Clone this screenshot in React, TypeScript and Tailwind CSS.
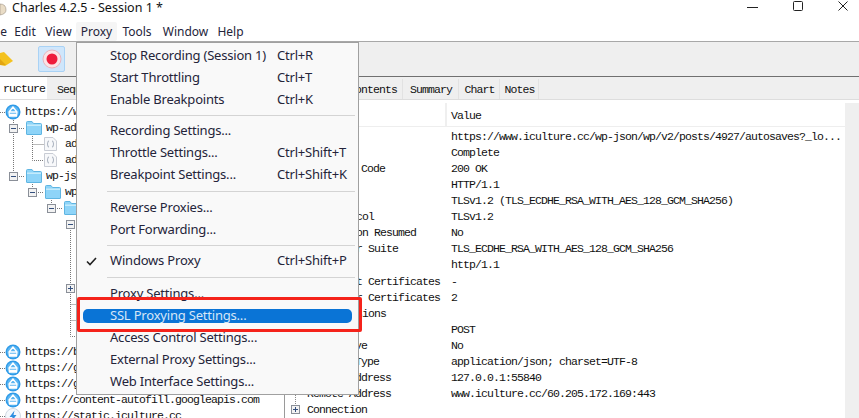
import React from 'react';

const mono = "font-['Liberation_Mono',monospace] text-[11.5px] tracking-[-0.9px] text-[#111]";

const Globe = () => (
  <svg width="16" height="16" viewBox="0 0 16 16" className="shrink-0">
    <circle cx="8" cy="8" r="7.5" fill="#2f9be8" />
    <circle cx="8" cy="8" r="6" fill="#5cb6f2" />
    <path d="M8 3 L4 8 L4.5 12 H11.5 L12 8 Z M4 8 H12 M5 10.5 H11" fill="none" stroke="#fff" strokeWidth="1.3" />
  </svg>
);

const Bolt = () => (
  <svg width="16" height="16" viewBox="0 0 16 16" className="shrink-0">
    <circle cx="8" cy="8" r="7.5" fill="#f4f8fc" stroke="#cfd8e2" />
    <path d="M9.5 2.5 L4.5 9 H7.5 L6.5 13.5 L11.5 7 H8.5 Z" fill="#2f8fe0" />
  </svg>
);

const Folder = () => (
  <svg width="16" height="14" viewBox="0 0 16 14" className="shrink-0">
    <path d="M0.5 13 V1.5 Q0.5 0.5 1.5 0.5 H6 L7.5 2.5 H14.5 Q15.5 2.5 15.5 3.5 V13 Q15.5 13.5 15 13.5 H1 Q0.5 13.5 0.5 13 Z" fill="#8ed4f8" stroke="#5fb5e2" />
    <rect x="1" y="3.5" width="14" height="1.5" fill="#c4ebfc" />
  </svg>
);

const FileIcon = () => (
  <svg width="13" height="14" viewBox="0 0 13 14" className="shrink-0">
    <path d="M0.5 0.5 H9 L12.5 4 V13.5 H0.5 Z" fill="#f7f8fa" stroke="#c8ccd4" />
    <path d="M5 4 Q3.8 4 3.8 5.2 V6.2 L3 7 L3.8 7.8 V9 Q3.8 10 5 10 M8 4 Q9.2 4 9.2 5.2 V6.2 L10 7 L9.2 7.8 V9 Q9.2 10 8 10" fill="none" stroke="#9aa4b2" strokeWidth="0.9" />
  </svg>
);

const Box = ({ plus = false }: { plus?: boolean }) => (
  <svg width="9" height="9" viewBox="0 0 9 9" className="shrink-0">
    <rect x="0.5" y="0.5" width="8" height="8" fill="#f2f2f2" stroke="#8a8f98" />
    <path d={plus ? 'M2 4.5 H7 M4.5 2 V7' : 'M2 4.5 H7'} stroke="#34507e" />
  </svg>
);

// dotted connectors behind the tree
const TreeLines = () => (
  <svg width="285" height="315" viewBox="0 0 285 315" className="absolute left-0 top-0">
    <path
      d="M0 8.5 H5 M13.5 16 V72 M17 24.5 H25 M17 72.5 H25 M32.5 32 V56.5 H44 M32.5 40.5 H44 M32.5 80 V84 M36 88.5 H44 M51.5 96 V100 M55 104.5 H63 M70.5 124 V232.5 H76 M70.5 200.5 H76 M70.5 216.5 H76 M0 248.5 H5 M0 264.5 H5 M0 280.5 H5 M0 296.5 H5 M0 312.5 H5"
      fill="none"
      stroke="#777"
      strokeDasharray="1 1"
    />
  </svg>
);

const Row = ({ className = '', children }: { className?: string; children?: React.ReactNode }) => (
  <div className={`h-4 flex items-center whitespace-nowrap ${mono} ${className}`}>{children}</div>
);

const Tree = () => (
  <div className="relative h-full overflow-hidden">
    <TreeLines />
    <div className="relative">
      <Row className="pl-[5px] gap-1"><Globe /><span>https://www.iculture.cc</span></Row>
      <Row className="pl-[9px]"><Box /><span className="w-2" /><span className="pr-1"><Folder /></span><span>wp-admin</span></Row>
      <Row className="pl-[44px] gap-2"><FileIcon /><span>admin-ajax.php</span></Row>
      <Row className="pl-[44px] gap-2"><FileIcon /><span>admin-post.php</span></Row>
      <Row className="pl-[9px]"><Box /><span className="w-2" /><span className="pr-1"><Folder /></span><span>wp-json</span></Row>
      <Row className="pl-[28px]"><Box /><span className="w-2" /><span className="pr-1"><Folder /></span><span>wp</span></Row>
      <Row className="pl-[47px]"><Box /><span className="w-2" /><Folder /></Row>
      <Row className="pl-[66px]"><Box /></Row>
      <Row /><Row /><Row />
      <Row className="pl-[66px]"><Box plus /></Row>
      <Row /><Row /><Row />
      <Row className="pl-[5px] gap-1"><Globe /><span>https://beacon.com</span></Row>
      <Row className="pl-[5px] gap-1"><Globe /><span>https://googleads.com</span></Row>
      <Row className="pl-[5px] gap-1"><Globe /><span>https://gstatic.com</span></Row>
      <Row className="pl-[5px] gap-1"><Globe /><span>https://content-autofill.googleapis.com</span></Row>
      <Row className="pl-[5px] gap-1"><Bolt /><span>https://static.iculture.cc</span></Row>
    </div>
  </div>
);

const overview: [string, string, string][] = [
  ['URL', 'pl-[22px]', 'https://www.iculture.cc/wp-json/wp/v2/posts/4927/autosaves?_lo...'],
  ['Status', 'pl-[22px]', 'Complete'],
  ['Response Code', 'pl-[22px]', '200 OK'],
  ['Protocol', 'pl-[22px]', 'HTTP/1.1'],
  ['TLS', 'pl-[22px]', 'TLSv1.2 (TLS_ECDHE_RSA_WITH_AES_128_GCM_SHA256)'],
  ['Protocol', 'pl-[41px]', 'TLSv1.2'],
  ['Session Resumed', 'pl-[41px]', 'No'],
  ['Cipher Suite', 'pl-[41px]', 'TLS_ECDHE_RSA_WITH_AES_128_GCM_SHA256'],
  ['ALPN', 'pl-[41px]', 'http/1.1'],
  ['Client Certificates', 'pl-[41px]', '-'],
  ['Server Certificates', 'pl-[41px]', '2'],
  ['Extensions', 'pl-[41px]', ''],
  ['Method', 'pl-[22px]', 'POST'],
  ['Kept Alive', 'pl-[22px]', 'No'],
  ['Content-Type', 'pl-[22px]', 'application/json; charset=UTF-8'],
  ['Client Address', 'pl-[22px]', '127.0.0.1:55840'],
  ['Remote Address', 'pl-[22px]', 'www.iculture.cc/60.205.172.169:443'],
  ['Connection', 'pl-[22px]', ''],
];

const Overview = () => (
  <div className="relative h-full flex">
    <div className="flex-1 min-w-0 flex flex-col">
      <div className={`h-[25px] flex items-center border-b border-[#eeeeee] ${mono}`}>
        <span className="w-[162px] h-full border-r-2 border-[#efefef]" />
        <span className="pl-[4px] pt-[2px]">Value</span>
      </div>
      <div className="relative pt-[1px]">
        <svg width="20" height="282" viewBox="0 0 20 282" className="absolute left-0 top-0">
          <path d="M10.5 0 V282" fill="none" stroke="#888" strokeDasharray="1 1" />
        </svg>
        {overview.map(([name, indent, value], i) => (
          <div key={i} className={`relative h-[16.1px] flex items-center whitespace-nowrap ${mono}`}>
            <div className={`w-[166px] shrink-0 ${indent} flex items-center`}>
              {name === 'Connection' && (
                <span className="absolute left-[6px] bg-white"><Box plus /></span>
              )}
              {name}
            </div>
            <span>{value}</span>
          </div>
        ))}
      </div>
    </div>
    <div className="w-[14px] shrink-0 bg-[#efefef]" />
  </div>
);

type MenuItem = { label: string; key?: string; check?: boolean; active?: boolean };

const menuItems: (number | MenuItem)[] = [
  { label: 'Stop Recording (Session 1)', key: 'Ctrl+R' },
  { label: 'Start Throttling', key: 'Ctrl+T' },
  { label: 'Enable Breakpoints', key: 'Ctrl+K' },
  4,
  { label: 'Recording Settings...' },
  { label: 'Throttle Settings...', key: 'Ctrl+Shift+T' },
  { label: 'Breakpoint Settings...', key: 'Ctrl+Shift+K' },
  5,
  { label: 'Reverse Proxies...' },
  { label: 'Port Forwarding...' },
  4,
  { label: 'Windows Proxy', key: 'Ctrl+Shift+P', check: true },
  5,
  { label: 'Proxy Settings...' },
  { label: 'SSL Proxying Settings...', active: true },
  { label: 'Access Control Settings...' },
  { label: 'External Proxy Settings...' },
  { label: 'Web Interface Settings...' },
];

const ProxyMenu = () => (
  <div className="absolute left-[76px] top-[42px] w-[283px] h-[353px] bg-[#f9f9f9] border border-[#a0a0a0] pt-[2px] flex flex-col text-[13px] tracking-[-0.2px] text-[#24243a]">
    {menuItems.map((item, i) =>
      typeof item === 'number' ? (
        <div key={i} className={`h-[1px] shrink-0 ml-[30px] mr-[3px] bg-[#d4d4d4] ${item === 4 ? 'my-[4px]' : 'my-[5px]'}`} />
      ) : (
        <div key={i} className="relative h-[22px] shrink-0 flex items-center whitespace-nowrap pl-[33px]">
          {item.active && <div className="absolute left-[6px] right-[6px] top-[4px] h-[14px] rounded-[5px] bg-[#0a74d6]" />}
          {item.check && (
            <svg width="11" height="9" viewBox="0 0 11 9" className="absolute left-[9px] top-[7px]">
              <path d="M1 4.5 L4 7.5 L10 1" fill="none" stroke="#222" strokeWidth="1.6" />
            </svg>
          )}
          <span className={item.active ? 'relative w-[167px] text-[#d6e6f6]' : 'w-[167px]'}>{item.label}</span>
          {item.key && <span>{item.key}</span>}
        </div>
      )
    )}
  </div>
);

export default function App() {
  return (
    <div className="relative w-[859px] h-[418px] overflow-hidden bg-white flex flex-col font-['Noto_Sans',sans-serif]">
      {/* title bar */}
      <div className="h-[22px] shrink-0 flex items-start text-[12.5px] text-[#111]">
        <div className="w-[12px] pt-[2px] overflow-hidden">
          <svg width="8" height="14" viewBox="0 0 8 14">
            <path d="M0 2 Q6 2 6 8 Q6 12 0 13 Z" fill="#e9dcc6" stroke="#9a8f80" strokeWidth="0.6" />
          </svg>
        </div>
        <span className="leading-[15px]">Charles 4.2.5 - Session 1 *</span>
        <div className="ml-auto flex items-start pt-[1px] pr-[11px] gap-[35px]">
          <svg width="11" height="12" viewBox="0 0 11 12"><path d="M0 6.5 H11" stroke="#222" /></svg>
          <svg width="10" height="10" viewBox="0 0 10 10"><rect x="0.5" y="0.5" width="9" height="9" rx="1" fill="none" stroke="#222" /></svg>
          <svg width="10" height="10" viewBox="0 0 10 10"><path d="M0.5 0.5 L9.5 9.5 M9.5 0.5 L0.5 9.5" stroke="#222" /></svg>
        </div>
      </div>
      {/* menu bar */}
      <div className="h-[20px] shrink-0 flex items-center text-[12px] text-[#24243a] border-b border-[#a8a8a8]">
        <span className="w-[9px] pr-[2px] overflow-hidden text-right">e</span>
        <span className="w-[32px] text-center">Edit</span>
        <span className="w-[35px] text-center">View</span>
        <span className="w-[41px] h-[19px] leading-[19px] text-center bg-[#f5f5f5] rounded-[2px]">Proxy</span>
        <span className="w-[40px] text-center">Tools</span>
        <span className="w-[57px] text-center">Window</span>
        <span className="w-[33px] text-center">Help</span>
      </div>
      {/* toolbar */}
      <div className="h-[35px] shrink-0 flex items-center bg-[#efefef] border-b border-[#707070]">
        <svg width="14" height="18" viewBox="0 0 14 18" className="shrink-0">
          <path d="M0 3 L4 2 L13 11 L5 16 L0 15 Z" fill="#f4c21f" />
          <path d="M0 9 L6 15 L0 15 Z" fill="#e2a512" />
        </svg>
        <div className="ml-[24px] w-[27px] h-[26px] rounded-[2px] bg-[#cfe6fb] border border-[#a9d2f5] flex items-center justify-center">
          <svg width="20" height="20" viewBox="0 0 20 20">
            <circle cx="10" cy="10" r="9" fill="#fbe3e6" stroke="#e9b5bd" />
            <circle cx="10" cy="10" r="5.5" fill="#ee1c3c" />
          </svg>
        </div>
      </div>
      {/* panes */}
      <div className="flex-1 min-h-0 flex">
        <div className="w-[285px] shrink-0 flex flex-col border-r border-[#9a9a9a]">
          <div className={`h-[23px] shrink-0 flex items-end gap-[5px] bg-[#efefef] border-b border-[#dddddd] ${mono}`}>
            <div className="w-[47px] h-[22px] pt-[2px] bg-white flex items-center justify-end pr-[2px] overflow-hidden">ructure</div>
            <div className="pl-[5px] h-[20px] pt-[2px] flex items-center">Sequence</div>
          </div>
          <div className="flex-1 min-h-0 pt-[4px]"><Tree /></div>
        </div>
        <div className="flex-1 min-w-0 flex flex-col">
          <div className={`h-[23px] shrink-0 flex items-end gap-[1px] bg-[#efefef] border-b border-[#dddddd] pl-[40px] ${mono}`}>
            <div className="w-[78px] h-[20px] pt-[2px] flex items-center justify-end pr-[5px] border-r border-[#e2e2e2]">Contents</div>
            <div className="w-[55px] h-[20px] pt-[2px] flex items-center justify-center border-r border-[#e2e2e2]">Summary</div>
            <div className="w-[40px] h-[20px] pt-[2px] flex items-center justify-center border-r border-[#e2e2e2]">Chart</div>
            <div className="w-[38px] h-[20px] pt-[2px] flex items-center justify-center border-r border-[#e2e2e2]">Notes</div>
          </div>
          <div className="flex-1 min-h-0 pt-[3px]"><Overview /></div>
        </div>
      </div>
      <ProxyMenu />
      {/* red annotation */}
      <div className="absolute left-[77px] top-[297px] w-[285px] h-[35px] border-[3px] border-[#f5231b] rounded-[2px]" />
    </div>
  );
}
